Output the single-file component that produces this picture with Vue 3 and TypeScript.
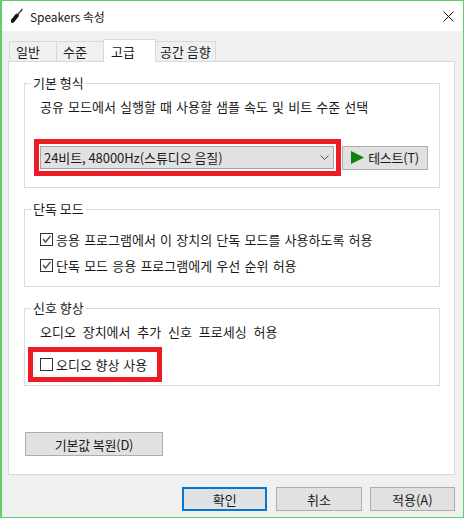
<script setup lang="ts">
interface TabItem {
  id: string;
  label: string;
}

const tabs: TabItem[] = [
  { id: "general", label: "일반" },
  { id: "levels", label: "수준" },
  { id: "advanced", label: "고급" },
  { id: "spatial", label: "공간 음향" },
];
const activeTab = "advanced";
</script>

<template>
  <div class="dialog">
    <header class="titlebar">
      <svg class="app-icon" width="16" height="16" viewBox="0 0 16 16">
        <path d="M1.5 13 L6 7.5" stroke="#111" stroke-width="3.6" stroke-linecap="round" fill="none" />
        <path d="M6 7.5 L11.5 1" stroke="#333" stroke-width="1.2" fill="none" />
      </svg>
      <span class="title">Speakers 속성</span>
      <svg class="close" width="11" height="11" viewBox="0 0 11 11">
        <path d="M0.5 0.5 L10.5 10.5 M10.5 0.5 L0.5 10.5" stroke="#111" stroke-width="1" fill="none" />
      </svg>
    </header>

    <div class="body">
      <div class="tabs">
        <div
          v-for="tab in tabs"
          :key="tab.id"
          class="tab"
          :class="[`tab-${tab.id}`, { 'is-active': activeTab === tab.id }]"
        >
          {{ tab.label }}
        </div>
      </div>

      <div class="panel">
        <fieldset class="group group-format">
          <legend>기본 형식</legend>
          <p class="hint hint-format">공유 모드에서 실행할 때 사용할 샘플 속도 및 비트 수준 선택</p>
          <div class="format-row">
            <div class="red-box red-combo">
              <div class="combo">
                <span class="combo-text">24비트, 48000Hz(스튜디오 음질)</span>
                <svg width="9" height="6" viewBox="0 0 9 6">
                  <path d="M0.5 0.5 L4.5 4.5 L8.5 0.5" stroke="#555" stroke-width="1" fill="none" />
                </svg>
              </div>
            </div>
            <button type="button" class="btn btn-test">
              <svg width="13" height="13" viewBox="0 0 13 13">
                <path d="M0 0 L13 6.5 L0 13 Z" fill="#127f12" />
              </svg>
              테스트(T)
            </button>
          </div>
        </fieldset>

        <fieldset class="group group-exclusive">
          <legend>단독 모드</legend>
          <label class="check">
            <span class="box">
              <svg width="11" height="11" viewBox="0 0 11 11">
                <path d="M2 5 L4.5 8 L9.5 2" stroke="#555" stroke-width="1.5" fill="none" />
              </svg>
            </span>
            응용 프로그램에서 이 장치의 단독 모드를 사용하도록 허용
          </label>
          <label class="check">
            <span class="box">
              <svg width="11" height="11" viewBox="0 0 11 11">
                <path d="M2 5 L4.5 8 L9.5 2" stroke="#555" stroke-width="1.5" fill="none" />
              </svg>
            </span>
            단독 모드 응용 프로그램에게 우선 순위 허용
          </label>
        </fieldset>

        <fieldset class="group group-enhance">
          <legend>신호 향상</legend>
          <p class="hint hint-enhance">오디오 장치에서 추가 신호 프로세싱 허용</p>
          <div class="red-box red-check">
            <label class="check check-enhance">
              <span class="box"></span>
              오디오 향상 사용
            </label>
          </div>
        </fieldset>

        <button type="button" class="btn btn-restore">기본값 복원(D)</button>
      </div>

      <footer class="actions">
        <button type="button" class="btn btn-action is-default">확인</button>
        <button type="button" class="btn btn-action">취소</button>
        <button type="button" class="btn btn-action">적용(A)</button>
      </footer>
    </div>
  </div>
</template>

<style scoped>
.dialog {
  width: 464px;
  height: 518px;
  box-sizing: border-box;
  border: 1px solid #5fcf6b;
  border-left-width: 2px;
  display: flex;
  flex-direction: column;
  background: #fff;
  color: #1a1a1a;
  font-family: "Noto Sans CJK KR", "Liberation Sans", sans-serif;
  font-size: 13px;
}

.titlebar {
  height: 30px;
  flex: none;
  display: flex;
  align-items: center;
  padding: 0 9px 0 9px;
  background: #fff;
}

.title {
  margin-left: 3px;
  font-size: 12px;
  letter-spacing: -0.1px;
}

.close {
  margin-left: auto;
}

.body {
  flex: 1;
  display: flex;
  flex-direction: column;
  background: #f0f0f0;
  padding: 8px 8px 0 6px;
}

.tabs {
  height: 22px;
  flex: none;
  display: flex;
  align-items: flex-end;
  padding-left: 2px;
}

.tab {
  height: 20px;
  box-sizing: border-box;
  border: 1px solid #d9d9d9;
  border-bottom: 0;
  margin-left: -1px;
  background: #f0f0f0;
  display: flex;
  align-items: center;
  padding-left: 6px;
  position: relative;
}

.tab-general,
.tab-levels {
  width: 48px;
}

.tab-advanced {
  width: 53px;
  padding-left: 7px;
}

.tab-spatial {
  width: 61px;
  padding-left: 4px;
}

.tab.is-active {
  height: 23px;
  background: #fff;
  z-index: 1;
  margin-bottom: -1px;
}

.panel {
  height: 414px;
  box-sizing: border-box;
  flex: none;
  border: 1px solid #d9d9d9;
  background: #fff;
  padding: 13px 14px 0 15px;
  display: flex;
  flex-direction: column;
}

.group {
  margin: 0;
  border: 1px solid #dcdcdc;
  padding: 0;
  box-sizing: border-box;
  min-width: 0;
}

.group legend {
  margin-left: -9px;
  padding: 0 2px;
  line-height: 16px;
}

.group-format {
  height: 113px;
  padding: 8px 0 0 15px;
}

.group-exclusive {
  height: 86px;
  margin-top: 13px;
  padding: 14px 0 0 15px;
}

.group-enhance {
  height: 86px;
  margin-top: 13px;
  padding: 8px 0 0 15px;
}

.hint {
  margin: 0;
  line-height: 16px;
}

.hint-format {
  word-spacing: 1.2px;
}

.hint-enhance {
  word-spacing: 3.9px;
}

.format-row {
  display: flex;
  align-items: center;
  margin-top: 24px;
  margin-left: -6px;
}

.red-box {
  border: 5px solid #ed1c24;
  background: #fff;
  box-sizing: border-box;
}

.red-combo {
  padding: 2px 2px 2px 1px;
}

.combo {
  width: 294px;
  height: 23px;
  box-sizing: border-box;
  border: 1px solid #a6a6a6;
  background: #e1e1e1;
  display: flex;
  align-items: center;
  justify-content: space-between;
  padding: 0 4px 0 3px;
}

.combo-text {
  letter-spacing: -0.07px;
}

.btn {
  font: inherit;
  color: inherit;
  padding: 0;
  border: 1px solid #adadad;
  background: #e1e1e1;
  box-sizing: border-box;
  display: flex;
  align-items: center;
  justify-content: center;
}

.btn-test {
  width: 86px;
  height: 24px;
  margin-left: 1px;
  gap: 4px;
  letter-spacing: -0.3px;
}

.check {
  display: flex;
  align-items: center;
  gap: 3px;
  height: 16px;
  word-spacing: 1.3px;
}

.check-enhance {
  word-spacing: 0.8px;
}

.group-exclusive .check + .check {
  margin-top: 10px;
}

.box {
  width: 13px;
  height: 13px;
  box-sizing: border-box;
  border: 1px solid #333;
  background: #fff;
  display: flex;
  align-items: center;
  justify-content: center;
  flex: none;
}

.red-check {
  width: 134px;
  height: 35px;
  margin-left: -12px;
  margin-top: 7px;
  padding: 0 0 0 7px;
  display: flex;
  align-items: center;
}

.btn-restore {
  width: 138px;
  height: 24px;
  margin-top: 46px;
  margin-left: 1px;
  letter-spacing: -0.2px;
}

.actions {
  display: flex;
  gap: 9px;
  margin-top: 12px;
  margin-left: 174px;
}

.btn-action {
  width: 86px;
  height: 24px;
}

.btn-action:nth-child(3) {
  margin-left: -1px;
}

.btn-action.is-default {
  border: 2px solid #0078d7;
}
</style>

<style>
html,
body {
  margin: 0;
  background: #fff;
}
</style>
